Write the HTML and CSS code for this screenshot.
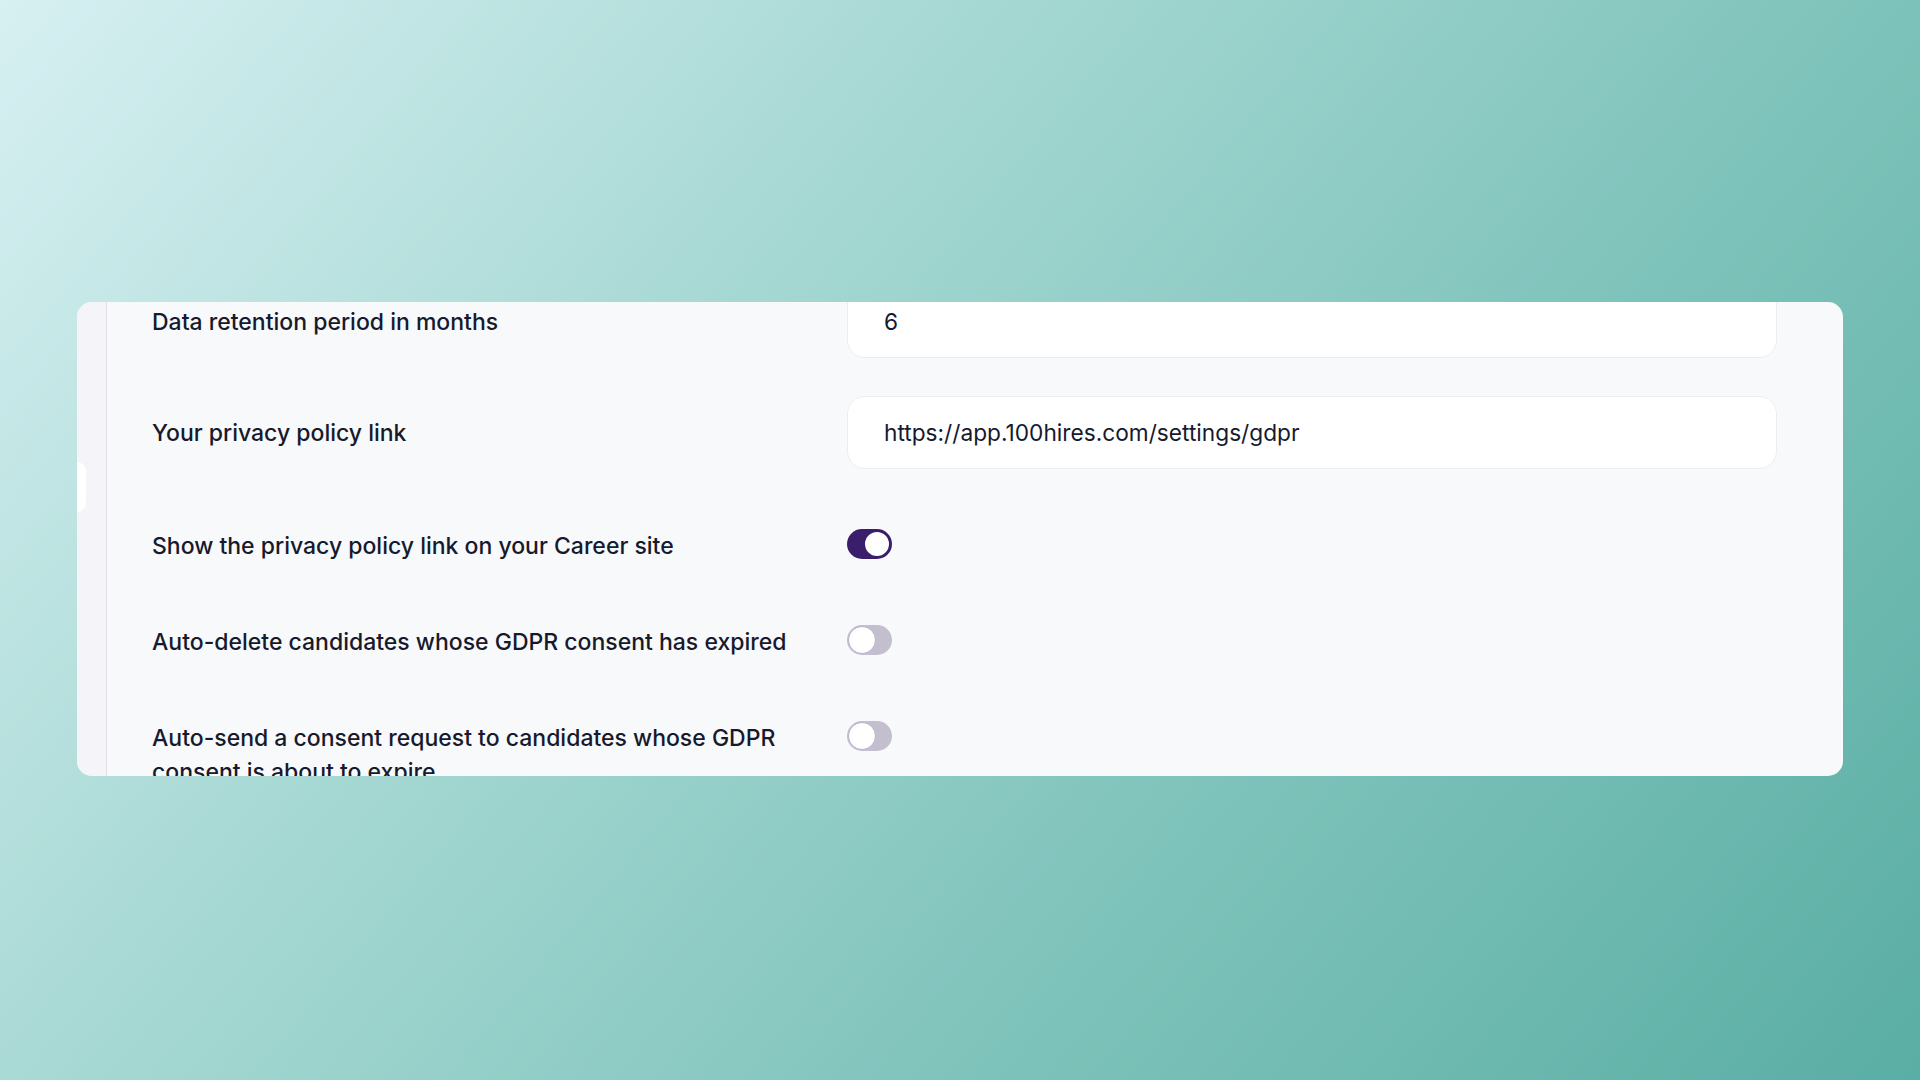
FILE: index.html
```html
<!DOCTYPE html>
<html lang="en">
<head>
<meta charset="utf-8">
<title>GDPR settings</title>
<link rel="stylesheet" href="styles.css">
</head>
<body>
<div class="page">
  <section class="card">
    <aside class="rail">
      <span class="rail-tab"></span>
    </aside>
    <div class="main">
      <div class="content">
        <div class="inputs">
          <div class="row">
            <label class="label">Data retention period in months</label>
            <div class="field"><span class="value">6</span></div>
          </div>
          <div class="row">
            <label class="label">Your privacy policy link</label>
            <div class="field"><span class="value">https://app.100hires.com/settings/gdpr</span></div>
          </div>
        </div>
        <div class="toggles">
          <div class="row top">
            <label class="label">Show the privacy policy link on your Career site</label>
            <span class="toggle on"><span class="knob"></span></span>
          </div>
          <div class="row top">
            <label class="label">Auto-delete candidates whose GDPR consent has expired</label>
            <span class="toggle"><span class="knob"></span></span>
          </div>
          <div class="row top">
            <label class="label">Auto-send a consent request to candidates whose GDPR consent is about to expire</label>
            <span class="toggle"><span class="knob"></span></span>
          </div>
        </div>
      </div>
    </div>
  </section>
</div>
</body>
</html>
```
FILE: styles.css
```css
* { box-sizing: border-box; }
html, body { margin: 0; padding: 0; }
body {
  width: 1920px;
  height: 1080px;
  overflow: hidden;
  font-family: Inter, "Noto Sans", sans-serif;
  color: #161a2c;
  background: linear-gradient(130deg, #d7f0f2 0%, #a6d8d3 35%, #80c4bc 65%, #5aaea4 100%);
}
.page {
  padding: 302px 77px 0 77px;
}
.card {
  display: flex;
  height: 474px;
  background: #f8f9fb;
  border-radius: 15px;
  overflow: hidden;
}
.rail {
  width: 30px;
  flex: none;
  background: #f4f4f9;
  border-right: 1px solid #e1e0ec;
  padding-top: 160px;
}
.rail-tab {
  display: block;
  width: 9px;
  height: 50px;
  background: #ffffff;
  border-radius: 0 12px 12px 0;
}
.main {
  flex: 1;
  padding: 0 66px 0 45px;
}
.content {
  margin-top: -17px;
}
.inputs {
  display: flex;
  flex-direction: column;
  gap: 38px;
}
.toggles {
  display: flex;
  flex-direction: column;
  gap: 62px;
  margin-top: 60px;
}
.row {
  display: grid;
  grid-template-columns: 695px 1fr;
  align-items: center;
}
.row.top { align-items: start; }
.label {
  font-size: 23px;
  line-height: 34px;
  font-weight: 500;
  padding-right: 40px;
}
.field {
  height: 73px;
  background: #ffffff;
  border: 1px solid #ecedf3;
  border-radius: 18px;
  display: flex;
  align-items: center;
  padding-left: 36px;
}
.value {
  font-size: 22.7px;
  color: #161a2c;
}
.toggle {
  position: relative;
  display: block;
  width: 45px;
  height: 30px;
  border-radius: 15px;
  background: #c3bfcf;
}
.toggle .knob {
  position: absolute;
  top: 1px;
  left: 1px;
  width: 28px;
  height: 28px;
  border-radius: 50%;
  background: #ffffff;
  border: 1px solid #b9b5c6;
}
.toggle.on { background: #3a1e6c; }
.toggle.on .knob {
  left: 16px;
  border: 2px solid #3a1e6c;
}
```
